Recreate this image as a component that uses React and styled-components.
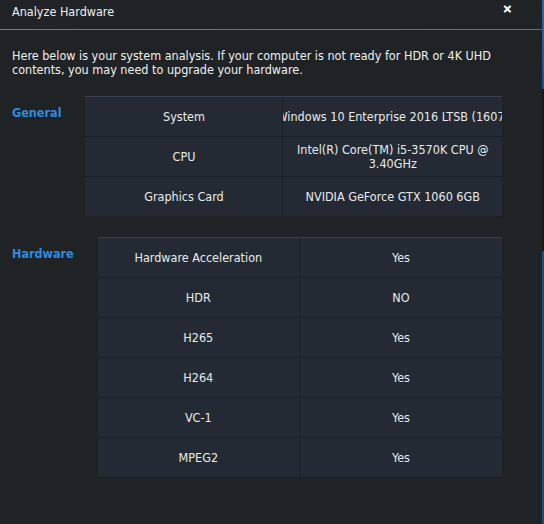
import React from "react"
import styled, { createGlobalStyle } from "styled-components"

const GlobalStyle = createGlobalStyle`
  html, body {
    margin: 0;
    padding: 0;
    background: #1b1d1f;
  }
  * {
    box-sizing: border-box;
  }
`

const generalRows = [
  ["System", "Windows 10 Enterprise 2016 LTSB (1607)"],
  ["CPU", "Intel(R) Core(TM) i5-3570K CPU @ 3.40GHz"],
  ["Graphics Card", "NVIDIA GeForce GTX 1060 6GB"],
]

const hardwareRows = [
  ["Hardware Acceleration", "Yes"],
  ["HDR", "NO"],
  ["H265", "Yes"],
  ["H264", "Yes"],
  ["VC-1", "Yes"],
  ["MPEG2", "Yes"],
]

const App = () => {
  return (
    <Page>
      <GlobalStyle />
      <Dialog>
        <Header>
          <Title>Analyze Hardware</Title>
          <Close>✕</Close>
        </Header>
        <HeaderLine />
        <Body>
          <Intro>
            Here below is your system analysis. If your computer is not ready for HDR or 4K UHD
            contents, you may need to upgrade your hardware.
          </Intro>

          <Section>
            <Label>General</Label>
            <Table columns="198px 1fr">
              {generalRows.map(([name, value]) => (
                <React.Fragment key={name}>
                  <Cell>{name}</Cell>
                  <Cell last nowrap={name === "System"} wrapWidth="204px">
                    <span>{value}</span>
                  </Cell>
                </React.Fragment>
              ))}
            </Table>
          </Section>

          <Section>
            <Label>Hardware</Label>
            <Table columns="1fr 1fr">
              {hardwareRows.map(([name, value]) => (
                <React.Fragment key={name}>
                  <Cell>{name}</Cell>
                  <Cell last>
                    <span>{value}</span>
                  </Cell>
                </React.Fragment>
              ))}
            </Table>
          </Section>
        </Body>
      </Dialog>
      <EdgeStrip />
    </Page>
  )
}

export default App

const Page = styled.div`
  display: flex;
  width: 544px;
  height: 524px;
  overflow: hidden;
`

const Dialog = styled.div`
  width: 542px;
  height: 524px;
  background: #1f2326;
  color: #e8e8e8;
  font-family: "DejaVu Sans Condensed", "Liberation Sans", sans-serif;
  font-size: 12px;
  display: flex;
  flex-direction: column;
`

const EdgeStrip = styled.div`
  width: 2px;
  height: 524px;
  background: linear-gradient(
    to bottom,
    #2a68b0 0px,
    #1d4f8e 89px,
    #18191a 89px,
    #18191a 251px,
    #1a4c8a 251px,
    #1a4c8a 524px
  );
`

const Header = styled.div`
  height: 29px;
  padding: 0 30px 0 12px;
  display: flex;
  align-items: center;
  justify-content: space-between;
`

const Title = styled.div`
  font-size: 12.5px;
  color: #f0f0f0;
  padding-bottom: 6px;
`

const Close = styled.div`
  font-family: "DejaVu Sans", sans-serif;
  font-size: 11px;
  font-weight: bold;
  color: #ffffff;
  padding-bottom: 10px;
  -webkit-text-stroke: 0.8px #ffffff;
`

const HeaderLine = styled.div`
  height: 1px;
  background: linear-gradient(90deg, #2d8ad8 0%, #6a5fd8 55%, #b833cc 100%);
`

const Body = styled.div`
  padding: 19px 40px 0 12px;
  display: flex;
  flex-direction: column;
  gap: 20px;
`

const Intro = styled.p`
  margin: 0;
  font-size: 12.5px;
  line-height: 13.5px;
  color: #f0f0f0;
`

const Section = styled.div`
  display: flex;
  gap: 24px;
  align-items: flex-start;
`

const Label = styled.div`
  font-weight: bold;
  font-size: 12.5px;
  color: #2a8de0;
  padding-top: 9px;
  font-family: "DejaVu Sans Condensed", "DejaVu Sans", sans-serif;
`

const Table = styled.div`
  flex: 1;
  display: grid;
  grid-template-columns: ${(p) => p.columns};
  grid-auto-rows: 40px;
  background: #232a33;
  border-top: 1px solid #34404f;
`

const Cell = styled.div`
  display: flex;
  align-items: center;
  justify-content: center;
  text-align: center;
  overflow: hidden;
  line-height: 13.5px;
  font-size: 12.5px;
  color: #eaeaea;
  border-bottom: 1px solid #1b2026;
  border-right: ${(p) => (p.last ? "none" : "1px solid #1b2026")};
  white-space: ${(p) => (p.nowrap ? "nowrap" : "normal")};

  span {
    flex-shrink: 0;
    max-width: ${(p) => (p.nowrap ? "none" : p.wrapWidth || "none")};
  }
`
